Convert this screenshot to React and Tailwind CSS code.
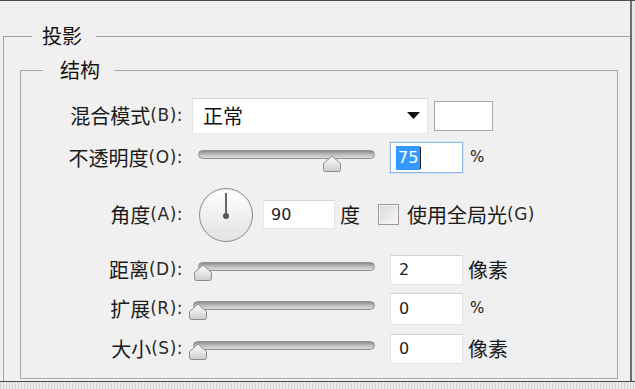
import React from 'react';

const cjk = "font-[Noto_Sans_CJK_SC,sans-serif]";
const latin = "font-[DejaVu_Sans,Noto_Sans_CJK_SC,sans-serif]";

const Label = ({ zh, key2 }) => (
  <div className="w-[162px] shrink-0 flex justify-end items-center text-[#1a1a1a]">
    <span className={`${cjk} text-[20px] leading-[28px]`}>{zh}</span>
    <span className={`${latin} text-[17px] leading-[28px] tracking-[0.5px] text-[#2b2b2b] -mt-[2px]`}>({key2}):</span>
  </div>
);

const Thumb = () => (
  <svg width="20" height="18" viewBox="0 0 20 18">
    <defs>
      <linearGradient id="th" x1="0" y1="0" x2="0" y2="1">
        <stop offset="0" stopColor="#ffffff" />
        <stop offset="1" stopColor="#cdcdcd" />
      </linearGradient>
    </defs>
    <path d="M10 1 L18.5 8.5 V14.5 Q18.5 16.5 16.5 16.5 H3.5 Q1.5 16.5 1.5 14.5 V8.5 Z" fill="url(#th)" stroke="#8a8a8a" strokeWidth="1" />
  </svg>
);

const Slider = ({ width, ml, thumbLeft, thumbTop }) => (
  <div className="relative h-[24px] shrink-0" style={{ width, marginLeft: ml }}>
    <div className="mt-[4px] h-[9px] rounded-full border border-[#8f8f8f] bg-gradient-to-b from-[#8e8e8e] via-[#bdbdbd] to-[#dcdcdc]" />
    <div className="absolute" style={{ left: thumbLeft, top: thumbTop }}>
      <Thumb />
    </div>
  </div>
);

const NumInput = ({ value, h = 'h-[30px]' }) => (
  <div className={`ml-[15px] w-[73px] ${h} shrink-0 bg-white border border-[#e4e4e4] border-t-[#d2d2d2] flex items-center pl-[8px] ${latin} text-[16px] text-[#222]`}>
    {value}
  </div>
);

const Cjk = ({ children }) => (
  <span className={`ml-[5px] ${cjk} text-[20px] leading-[28px] text-[#1a1a1a]`}>{children}</span>
);

const Pct = () => (
  <span className={`ml-[7px] ${latin} text-[15px] leading-[28px] text-[#1a1a1a] -mt-[2px]`}>%</span>
);

export default function App() {
  return (
    <div className="w-[635px] h-[389px] bg-[#f0f0f0] overflow-hidden flex flex-col">
      <div className="flex h-[382px] border-t border-b border-[#4a4a4a]">
        <div className="w-[632px] h-full border-r-2 border-[#6e6e6e] overflow-hidden">
          <fieldset className="ml-[3px] mt-[21px] border-t border-l border-[#a3a3a3] h-[400px]">
            <legend className={`ml-[28px] pl-[10px] pr-[14px] ${cjk} text-[20px] leading-[28px] text-[#111]`}>投影</legend>
            <fieldset className="ml-[16px] mr-[12px] mt-[6px] border border-[#a8a8a8] pt-[11px] pb-[10px]">
              <legend className={`ml-[22px] pl-[17px] pr-[14px] ${cjk} text-[20px] leading-[28px] text-[#111]`}>结构</legend>

              {/* 混合模式 */}
              <div className="flex items-center h-[41px]">
                <Label zh="混合模式" key2="B" />
                <div className="ml-[9px] w-[236px] h-[36px] bg-white border border-[#e6e6e6] border-t-[#d4d4d4] flex items-center justify-between pl-[10px] pr-[7px]">
                  <span className={`${cjk} text-[20px] text-[#111]`}>正常</span>
                  <svg width="13" height="7" viewBox="0 0 13 7"><path d="M0 0 H13 L6.5 7 Z" fill="#111" /></svg>
                </div>
                <div className="ml-[6px] w-[59px] h-[30px] bg-white border border-[#a9a9a9]" />
              </div>

              {/* 不透明度 */}
              <div className="flex items-center h-[43px]">
                <Label zh="不透明度" key2="O" />
                <Slider width={177} ml={15} thumbLeft={124} thumbTop={9} />
                <div className={`ml-[15px] w-[73px] h-[31px] shrink-0 bg-white border border-[#8db5e3] shadow-[0_0_0_1px_#d6e6f7] flex items-center pl-[5px] ${latin} text-[16px]`}>
                  <span className="bg-[#3399ff] text-white px-[2px] leading-[24px]">75</span>
                  <span className="w-px h-[22px] bg-[#222]" />
                </div>
                <Pct />
              </div>

              {/* 角度 */}
              <div className="flex items-center h-[71px]">
                <Label zh="角度" key2="A" />
                <div className="ml-[16px] w-[54px] h-[54px] shrink-0 rounded-full border border-[#8c8c8c] bg-gradient-to-b from-[#ffffff] to-[#e2e2e2] relative flex justify-center shadow-[inset_0_1px_2px_rgba(0,0,0,0.08)]">
                  <div className="absolute top-[4px] w-[2px] h-[23px] bg-[#666]" />
                  <div className="absolute top-[24px] w-[6px] h-[6px] rounded-full bg-[#555]" />
                </div>
                <div className={`ml-[10px] w-[72px] h-[29px] shrink-0 bg-white border border-[#e4e4e4] border-t-[#d2d2d2] flex items-center pl-[7px] ${latin} text-[16px] text-[#222]`}>90</div>
                <Cjk>度</Cjk>
                <div className="ml-[18px] w-[21px] h-[21px] shrink-0 border border-[#9a9a9a] bg-gradient-to-br from-[#d8d8d8] to-[#f8f8f8] shadow-[inset_0_0_0_1px_#f4f4f4]" />
                <span className={`ml-[8px] ${cjk} text-[20px] leading-[28px] text-[#1a1a1a]`}>使用全局光</span>
                <span className={`${latin} text-[17px] leading-[28px] tracking-[0.5px] text-[#2b2b2b] -mt-[2px]`}>(G)</span>
              </div>

              {/* 距离 */}
              <div className="flex items-center h-[39px]">
                <Label zh="距离" key2="D" />
                <Slider width={177} ml={15} thumbLeft={-5} thumbTop={6} />
                <NumInput value="2" />
                <Cjk>像素</Cjk>
              </div>

              {/* 扩展 */}
              <div className="flex items-center h-[40px]">
                <Label zh="扩展" key2="R" />
                <Slider width={182} ml={10} thumbLeft={-5} thumbTop={6} />
                <NumInput value="0" h="h-[32px]" />
                <Pct />
              </div>

              {/* 大小 */}
              <div className="flex items-center h-[39px]">
                <Label zh="大小" key2="S" />
                <Slider width={182} ml={10} thumbLeft={-5} thumbTop={6} />
                <NumInput value="0" />
                <Cjk>像素</Cjk>
              </div>
            </fieldset>
          </fieldset>
        </div>
        <div className="flex-1 bg-[#e6e6e6]" />
      </div>
      <div className="flex-1 bg-[repeating-linear-gradient(90deg,#d2d2d2_0_1px,#ececec_1px_3px)]" />
    </div>
  );
}
